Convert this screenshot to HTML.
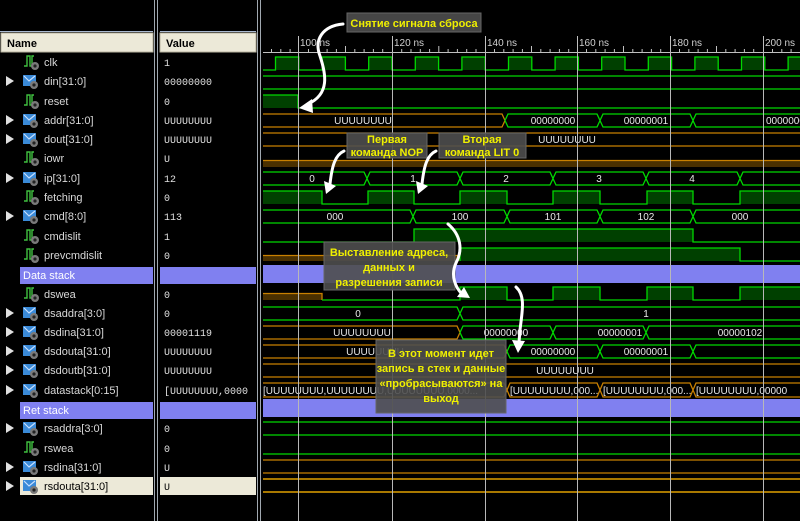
<!DOCTYPE html>
<html><head><meta charset="utf-8"><style>
html,body{margin:0;padding:0;background:#000;}
svg{display:block}
.n{font-family:"Liberation Sans",sans-serif;font-size:11px;fill:#d8d8d8}
.v{font-family:"Liberation Mono",monospace;font-size:10px;fill:#e0e0e0}
.w{font-family:"Liberation Sans",sans-serif;font-size:10px;fill:#e8e8e8}
.c{font-family:"Liberation Sans","Noto Sans CJK SC",sans-serif;font-size:11px;font-weight:bold;fill:#f0f000}
.g{fill:none;stroke:#00d800;stroke-width:1.3}
.o{fill:none;stroke:#c88000;stroke-width:1.3}
.f{fill:#004000}
</style></head><body>
<svg width="800" height="521" viewBox="0 0 800 521" xmlns="http://www.w3.org/2000/svg">
<defs>
<clipPath id="wc"><rect x="263" y="0" width="537" height="521"/></clipPath>
<g id="bus"><rect x="0" y="0" width="13" height="11" fill="#3a8ad8"/><path d="M1 1 L6 6 L12 1" stroke="#c8e0ff" stroke-width="1.2" fill="none"/><circle cx="11" cy="10" r="4" fill="#7a7a7a"/><circle cx="11" cy="10" r="1.6" fill="#222"/></g>
<g id="bit"><path d="M0 10 L3 10 L3 0 L6 0 L6 10 L8 10 L8 0 L10 0" stroke="#40c040" stroke-width="1.4" fill="none"/><circle cx="11" cy="10" r="4" fill="#7a7a7a"/><circle cx="11" cy="10" r="1.6" fill="#222"/></g>
<g id="tri"><path d="M0 0 L8 5 L0 10 Z" fill="#e0e0e0"/></g>
</defs>

<!-- top -->
<rect x="0" y="0" width="800" height="31" fill="#000"/>
<line x1="0" y1="31.5" x2="153" y2="31.5" stroke="#a8b8d0"/>
<line x1="160" y1="31.5" x2="256" y2="31.5" stroke="#a8b8d0"/>
<rect x="1" y="33" width="152" height="19" fill="#ece9d8" stroke="#b8b4a0"/>
<rect x="160" y="33" width="96" height="19" fill="#ece9d8" stroke="#b8b4a0"/>
<text x="7" y="47" font-family="Liberation Sans,sans-serif" font-size="11" font-weight="bold" fill="#000">Name</text>
<text x="166" y="47" font-family="Liberation Sans,sans-serif" font-size="11" font-weight="bold" fill="#000">Value</text>
<!-- dividers -->
<rect x="154" y="0" width="5" height="521" fill="#000"/>
<line x1="154.5" y1="0" x2="154.5" y2="521" stroke="#a0a8b0"/>
<line x1="157.5" y1="0" x2="157.5" y2="521" stroke="#a0a8b0"/>
<line x1="257.5" y1="0" x2="257.5" y2="521" stroke="#a0a8b0"/>
<line x1="260.5" y1="0" x2="260.5" y2="521" stroke="#a0a8b0"/>

<!-- purple group rows -->
<rect x="20" y="267" width="133" height="17" fill="#8080f0"/>
<rect x="160" y="267" width="96" height="17" fill="#8080f0"/>
<rect x="20" y="402" width="133" height="17" fill="#8080f0"/>
<rect x="160" y="402" width="96" height="17" fill="#8080f0"/>
<rect x="20" y="477" width="133" height="18" fill="#ece9d8"/>
<rect x="160" y="477" width="96" height="18" fill="#ece9d8"/>

<!-- names -->
<use href="#bit" x="24" y="56"/><text class="n" x="44" y="66">clk</text>
<use href="#tri" x="6" y="76"/><use href="#bus" x="23" y="75"/><text class="n" x="44" y="85">din[31:0]</text>
<use href="#bit" x="24" y="95"/><text class="n" x="44" y="105">reset</text>
<use href="#tri" x="6" y="115"/><use href="#bus" x="23" y="114"/><text class="n" x="44" y="124">addr[31:0]</text>
<use href="#tri" x="6" y="134"/><use href="#bus" x="23" y="133"/><text class="n" x="44" y="143">dout[31:0]</text>
<use href="#bit" x="24" y="152"/><text class="n" x="44" y="162">iowr</text>
<use href="#tri" x="6" y="173"/><use href="#bus" x="23" y="172"/><text class="n" x="44" y="182">ip[31:0]</text>
<use href="#bit" x="24" y="191"/><text class="n" x="44" y="201">fetching</text>
<use href="#tri" x="6" y="211"/><use href="#bus" x="23" y="210"/><text class="n" x="44" y="220">cmd[8:0]</text>
<use href="#bit" x="24" y="230"/><text class="n" x="44" y="240">cmdislit</text>
<use href="#bit" x="24" y="249"/><text class="n" x="44" y="259">prevcmdislit</text>
<text class="n" x="23" y="279" fill="#fff" style="fill:#fff">Data stack</text>
<use href="#bit" x="24" y="288"/><text class="n" x="44" y="298">dswea</text>
<use href="#tri" x="6" y="308"/><use href="#bus" x="23" y="307"/><text class="n" x="44" y="317">dsaddra[3:0]</text>
<use href="#tri" x="6" y="327"/><use href="#bus" x="23" y="326"/><text class="n" x="44" y="336">dsdina[31:0]</text>
<use href="#tri" x="6" y="346"/><use href="#bus" x="23" y="345"/><text class="n" x="44" y="355">dsdouta[31:0]</text>
<use href="#tri" x="6" y="365"/><use href="#bus" x="23" y="364"/><text class="n" x="44" y="374">dsdoutb[31:0]</text>
<use href="#tri" x="6" y="385"/><use href="#bus" x="23" y="384"/><text class="n" x="44" y="394">datastack[0:15]</text>
<text class="n" x="23" y="414" style="fill:#fff">Ret stack</text>
<use href="#tri" x="6" y="423"/><use href="#bus" x="23" y="422"/><text class="n" x="44" y="432">rsaddra[3:0]</text>
<use href="#bit" x="24" y="442"/><text class="n" x="44" y="452">rswea</text>
<use href="#tri" x="6" y="462"/><use href="#bus" x="23" y="461"/><text class="n" x="44" y="471">rsdina[31:0]</text>
<use href="#tri" x="6" y="481"/><use href="#bus" x="23" y="480"/><text class="n" x="44" y="490" style="fill:#000">rsdouta[31:0]</text>

<!-- values -->
<g class="v">
<text x="164" y="66">1</text>
<text x="164" y="85">00000000</text>
<text x="164" y="105">0</text>
<text x="164" y="124">UUUUUUUU</text>
<text x="164" y="143">UUUUUUUU</text>
<text x="164" y="162">U</text>
<text x="164" y="182">12</text>
<text x="164" y="201">0</text>
<text x="164" y="220">113</text>
<text x="164" y="240">1</text>
<text x="164" y="259">0</text>
<text x="164" y="298">0</text>
<text x="164" y="317">0</text>
<text x="164" y="336">00001119</text>
<text x="164" y="355">UUUUUUUU</text>
<text x="164" y="374">UUUUUUUU</text>
<text x="164" y="394">[UUUUUUUU,0000</text>
<text x="164" y="432">0</text>
<text x="164" y="452">0</text>
<text x="164" y="471">U</text>
<text x="164" y="490" style="fill:#000">U</text>
</g>

<!-- waves -->
<g clip-path="url(#wc)">
<!-- ruler -->
<line x1="263" y1="52.5" x2="800" y2="52.5" stroke="#c0c0c0"/>
<path stroke="#c0c0c0" d="M271.5 49V52M280.8 49V52M290.1 49V52M308.5 49V52M317.8 49V52M327.1 49V52M336.4 49V52M345.5 46V52M354.8 49V52M364.1 49V52M373.4 49V52M382.7 49V52M401.7 49V52M411 49V52M420.3 49V52M429.6 49V52M438.8 46V52M448.1 49V52M457.4 49V52M466.7 49V52M476 49V52M494.5 49V52M503.8 49V52M513.1 49V52M522.4 49V52M531.5 46V52M540.8 49V52M550.1 49V52M559.4 49V52M568.7 49V52M586.5 49V52M595.8 49V52M605.1 49V52M614.4 49V52M623.5 46V52M632.8 49V52M642.1 49V52M651.4 49V52M660.7 49V52M679.5 49V52M688.8 49V52M698.1 49V52M707.4 49V52M716.5 46V52M725.8 49V52M735.1 49V52M744.4 49V52M753.7 49V52M772.5 49V52M781.8 49V52M791.1 49V52"/>
<g font-family="Liberation Sans,sans-serif" font-size="10" fill="#d0d0d0">
<text x="300" y="46">100 ns</text><text x="394" y="46">120 ns</text><text x="487" y="46">140 ns</text><text x="579" y="46">160 ns</text><text x="672" y="46">180 ns</text><text x="765" y="46">200 ns</text>
</g>
<path stroke="#c0c0c0" d="M298.5 36V52M392.5 36V52M485.5 36V52M577.5 36V52M670.5 36V52M763.5 36V52"/>

<!-- clk -->
<path class="f" d="M275.5 57H298.8V70H275.5ZM322.1 57H345.4V70H322.1ZM368.7 57H392V70H368.7ZM415.3 57H438.6V70H415.3ZM461.9 57H485.2V70H461.9ZM508.5 57H531.8V70H508.5ZM555.1 57H578.4V70H555.1ZM601.7 57H625V70H601.7ZM648.3 57H671.6V70H648.3ZM694.9 57H718.2V70H694.9ZM741.5 57H764.8V70H741.5ZM788.1 57H800V70H788.1Z"/>
<path class="g" d="M263 70H275.5V57H298.8V70H322.1V57H345.4V70H368.7V57H392V70H415.3V57H438.6V70H461.9V57H485.2V70H508.5V57H531.8V70H555.1V57H578.4V70H601.7V57H625V70H648.3V57H671.6V70H694.9V57H718.2V70H741.5V57H764.8V70H788.1V57H800"/>
<!-- din -->
<path class="g" d="M263 76H800M263 89H800"/>
<!-- reset -->
<rect class="f" x="263" y="95" width="35" height="13"/>
<path class="g" d="M263 95H298V108H800"/>
<!-- addr -->
<path class="o" d="M250 114H502L505 120.5L502 127H250"/>
<path class="g" d="M505 120.5L508 114H597L600 120.5L603 114H690L693 120.5L696 114H810M505 120.5L508 127H597L600 120.5L603 127H690L693 120.5L696 127H810"/>
<text class="w" x="363" y="124" text-anchor="middle">UUUUUUUU</text>
<text class="w" x="553" y="124" text-anchor="middle">00000000</text>
<text class="w" x="646" y="124" text-anchor="middle">00000001</text>
<text class="w" x="766" y="124">00000002</text>
<!-- dout -->
<path class="o" d="M263 133H800M263 146H800"/>
<text class="w" x="567" y="143" text-anchor="middle">UUUUUUUU</text>
<!-- iowr -->
<rect x="263" y="160" width="537" height="7" fill="#4a3000"/>
<path class="o" d="M263 160.5H800"/>
<!-- ip -->
<path class="g" d="M250 172H364L367 178.5L370 172H457L460 178.5L463 172H550L553 178.5L556 172H643L646 178.5L649 172H737L740 178.5L743 172H810M250 185H364L367 178.5L370 185H457L460 178.5L463 185H550L553 178.5L556 185H643L646 178.5L649 185H737L740 178.5L743 185H810"/>
<g class="w" text-anchor="middle"><text x="312" y="182">0</text><text x="413" y="182">1</text><text x="506" y="182">2</text><text x="599" y="182">3</text><text x="692" y="182">4</text></g>
<!-- fetching -->
<path class="f" d="M263 191H322V204H263ZM368 191H414V204H368ZM460 191H507V204H460ZM553 191H600V204H553ZM647 191H693V204H647ZM740 191H800V204H740Z"/>
<path class="g" d="M263 191H322V204H368V191H414V204H460V191H507V204H553V191H600V204H647V191H693V204H740V191H800"/>
<!-- cmd -->
<path class="g" d="M250 210H410L413 216.5L416 210H504L507 216.5L510 210H597L600 216.5L603 210H690L693 216.5L696 210H810M250 223H410L413 216.5L416 223H504L507 216.5L510 223H597L600 216.5L603 223H690L693 216.5L696 223H810"/>
<g class="w" text-anchor="middle"><text x="335" y="220">000</text><text x="460" y="220">100</text><text x="553" y="220">101</text><text x="646" y="220">102</text><text x="740" y="220">000</text></g>
<!-- cmdislit -->
<rect class="f" x="414" y="229" width="279" height="13"/>
<path class="g" d="M263 242H414V229H693V242H800"/>
<!-- prevcmdislit -->
<rect x="263" y="255" width="197" height="6" fill="#4a3000"/>
<path class="o" d="M263 255.5H460"/>
<rect class="f" x="460" y="248" width="280" height="13"/>
<path class="g" d="M460 261V248H740V261H800"/>
<!-- Data stack -->
<rect x="263" y="265" width="537" height="18" fill="#8080f0"/>
<!-- dswea -->
<rect x="263" y="293" width="59" height="7" fill="#4a3000"/>
<path class="o" d="M263 293.5H322V300"/>
<path class="f" d="M460 287H507V300H460ZM553 287H600V300H553ZM647 287H693V300H647ZM740 287H800V300H740Z"/>
<path class="g" d="M322 300H460V287H507V300H553V287H600V300H647V287H693V300H740V287H800"/>
<!-- dsaddra -->
<path class="g" d="M250 307H457L460 313.5L463 307H810M250 320H457L460 313.5L463 320H810"/>
<text class="w" x="358" y="317" text-anchor="middle">0</text><text class="w" x="646" y="317" text-anchor="middle">1</text>
<!-- dsdina -->
<path class="o" d="M250 326H457L460 332.5L457 339H250"/>
<path class="g" d="M460 332.5L463 326H550L553 332.5L556 326H643L646 332.5L649 326H810M460 332.5L463 339H550L553 332.5L556 339H643L646 332.5L649 339H810"/>
<g class="w" text-anchor="middle"><text x="362" y="336">UUUUUUUU</text><text x="506" y="336">00000000</text><text x="620" y="336">00000001</text><text x="740" y="336">00000102</text></g>
<!-- dsdouta -->
<path class="o" d="M250 345H504L507 351.5L504 358H250"/>
<path class="g" d="M507 351.5L510 345H597L600 351.5L603 345H690L693 351.5L696 345H810M507 351.5L510 358H597L600 351.5L603 358H690L693 351.5L696 358H810"/>
<g class="w" text-anchor="middle"><text x="375" y="355">UUUUUUUU</text><text x="553" y="355">00000000</text><text x="646" y="355">00000001</text></g>
<!-- dsdoutb -->
<path class="o" d="M263 364H800M263 377H800"/>
<text class="w" x="565" y="374" text-anchor="middle">UUUUUUUU</text>
<!-- datastack -->
<path class="o" d="M250 383H504L507 390L510 383H597L600 390L603 383H690L693 390L696 383H810M250 397H504L507 390L510 397H597L600 390L603 397H690L693 390L696 397H810"/>
<g class="w"><text x="263" y="394">[UUUUUUUU,UUUUUUUU,UUUUUUUU,0000...</text><text x="510" y="394">[UUUUUUUU,000...</text><text x="603" y="394">[UUUUUUUU,000...</text><text x="696" y="394">[UUUUUUUU,00000</text></g>
<!-- Ret stack -->
<rect x="263" y="399" width="537" height="18" fill="#8080f0"/>
<path class="g" d="M263 422H800M263 435H800M263 454H800"/>
<path class="o" d="M263 460H800M263 473H800"/>
<path d="M263 479H800M263 492H800" stroke="#e0a000" stroke-width="1.4" fill="none"/>
<!-- grid -->
<path stroke="#b8b8b8" stroke-width="1" d="M298.5 52V521M392.5 52V521M485.5 52V521M577.5 52V521M670.5 52V521M763.5 52V521"/>
</g>

<!-- callouts -->
<g fill="rgba(78,78,78,0.9)" stroke="#666">
<rect x="347" y="13" width="134" height="19"/>
<rect x="347" y="133" width="80" height="25"/>
<rect x="439" y="133" width="87" height="25"/>
<rect x="324" y="242" width="131" height="48"/>
<rect x="376" y="340" width="130" height="73"/>
</g>
<text class="c" x="414" y="27" text-anchor="middle">Снятие сигнала сброса</text>
<text class="c" x="387" y="143" text-anchor="middle">Первая</text>
<text class="c" x="387" y="156" text-anchor="middle">команда NOP</text>
<text class="c" x="482" y="143" text-anchor="middle">Вторая</text>
<text class="c" x="482" y="156" text-anchor="middle">команда LIT 0</text>
<text class="c" x="389" y="256" text-anchor="middle">Выставление адреса,</text>
<text class="c" x="389" y="271" text-anchor="middle">данных и</text>
<text class="c" x="389" y="286" text-anchor="middle">разрешения записи</text>
<text class="c" x="441" y="357" text-anchor="middle">В этот момент идет</text>
<text class="c" x="441" y="372" text-anchor="middle">запись в стек и данные</text>
<text class="c" x="441" y="387" text-anchor="middle">«пробрасываются» на</text>
<text class="c" x="441" y="402" text-anchor="middle">выход</text>

<!-- arrows -->
<g fill="none" stroke="#fff" stroke-width="3" stroke-linecap="round">
<path d="M343 24C322 26 314 40 320 56C326 74 330 94 308 104"/>
<path d="M344 151C335 155 332 166 330 184"/>
<path d="M436 151C427 155 424 166 422 184"/>
<path d="M448 224C461 235 463 250 456 263C450 276 456 288 462 294"/>
<path d="M516 287C526 296 522 312 520 330L519 342"/>
</g>
<g fill="#fff">
<polygon points="299,108 312,99 313,113"/>
<polygon points="326,194 324,181 336,186"/>
<polygon points="418,194 416,181 428,186"/>
<polygon points="470,298 457,297 464,287"/>
<polygon points="518,353 512,340 525,341"/>
</g>
</svg>
</body></html>
